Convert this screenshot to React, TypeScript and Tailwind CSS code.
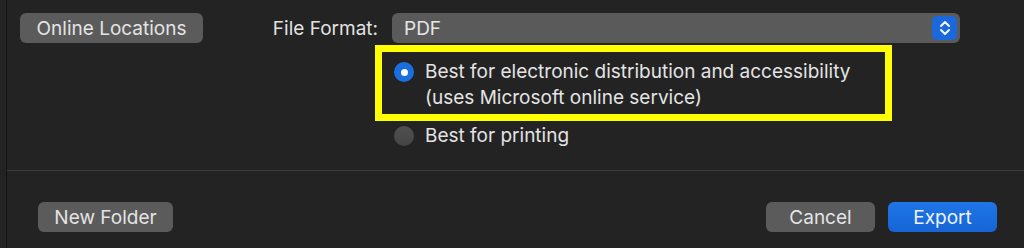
import React from "react";

const font = { fontFamily: "Inter, 'Noto Sans', sans-serif" };

function Btn({ children, w, blue }: { children: React.ReactNode; w: string; blue?: boolean }) {
  return (
    <div
      className={`${w} h-[30px] rounded-[6px] flex items-center justify-center text-[19px] leading-none ${
        blue ? "bg-gradient-to-b from-[#1f76e6] to-[#1664d6] text-[#eef3fd]" : "bg-[#5b5b5b] text-[#e4e4e4]"
      }`}
    >
      {children}
    </div>
  );
}

export default function App() {
  return (
    <div className="w-[1024px] h-[248px] bg-[#232323] flex overflow-hidden" style={font}>
      <div className="w-[6px] shrink-0" />
      <div className="w-[1px] shrink-0 bg-[#121212]" />
      <div className="flex-1 flex flex-col">
        {/* top row */}
        <div className="mt-[13px] h-[30px] flex items-center">
          <div className="ml-[13px]">
            <Btn w="w-[183px]">Online Locations</Btn>
          </div>
          <div className="w-[175px] text-right text-[19px] text-[#e2e2e2] leading-none">File Format:</div>
          <div className="ml-[14px] w-[568px] h-[30px] rounded-[6px] bg-[#5a5a5a] flex items-center justify-between pl-[12px] pr-[3px]">
            <span className="text-[19px] text-[#e6e6e6] leading-none">PDF</span>
            <div className="w-[25px] h-[24px] rounded-[5px] bg-[#1a68dc] flex items-center justify-center">
              <svg width="12" height="18" viewBox="0 0 12 18" fill="none" stroke="#f2f6ff" strokeWidth="2" strokeLinecap="round" strokeLinejoin="round">
                <path d="M2 7 L6 3 L10 7" />
                <path d="M2 11 L6 15 L10 11" />
              </svg>
            </div>
          </div>
        </div>

        {/* highlighted radio */}
        <div className="mt-[2px] ml-[368px] w-[517px] h-[76px] border-[7px] border-[#ffff00] pl-[12px] pt-[7px] flex">
          <div className="h-[26px] flex items-center">
            <div className="w-[20px] h-[20px] rounded-full bg-[#1a6fe0] flex items-center justify-center">
              <div className="w-[7px] h-[7px] rounded-full bg-white" />
            </div>
          </div>
          <div className="ml-[11px] text-[19px] leading-[26px] text-[#e4e4e4]">
            <div>Best for electronic distribution and accessibility</div>
            <div>(uses Microsoft online service)</div>
          </div>
        </div>

        {/* second radio */}
        <div className="mt-[2px] ml-[387px] h-[26px] flex items-center">
          <div className="w-[20px] h-[20px] rounded-full bg-gradient-to-b from-[#505050] to-[#444444]" />
          <div className="ml-[11px] text-[19px] leading-[26px] text-[#e4e4e4]">Best for printing</div>
        </div>

        {/* separator */}
        <div className="mt-[21px] h-[1px] bg-[#3a3a3a]" />

        {/* bottom row */}
        <div className="mt-[31px] h-[30px] flex items-center">
          <div className="ml-[31px]">
            <Btn w="w-[135px]">New Folder</Btn>
          </div>
          <div className="flex-1" />
          <div className="flex gap-[13px] mr-[27px]">
            <Btn w="w-[109px]">Cancel</Btn>
            <Btn w="w-[109px]" blue>
              Export
            </Btn>
          </div>
        </div>
      </div>
    </div>
  );
}
